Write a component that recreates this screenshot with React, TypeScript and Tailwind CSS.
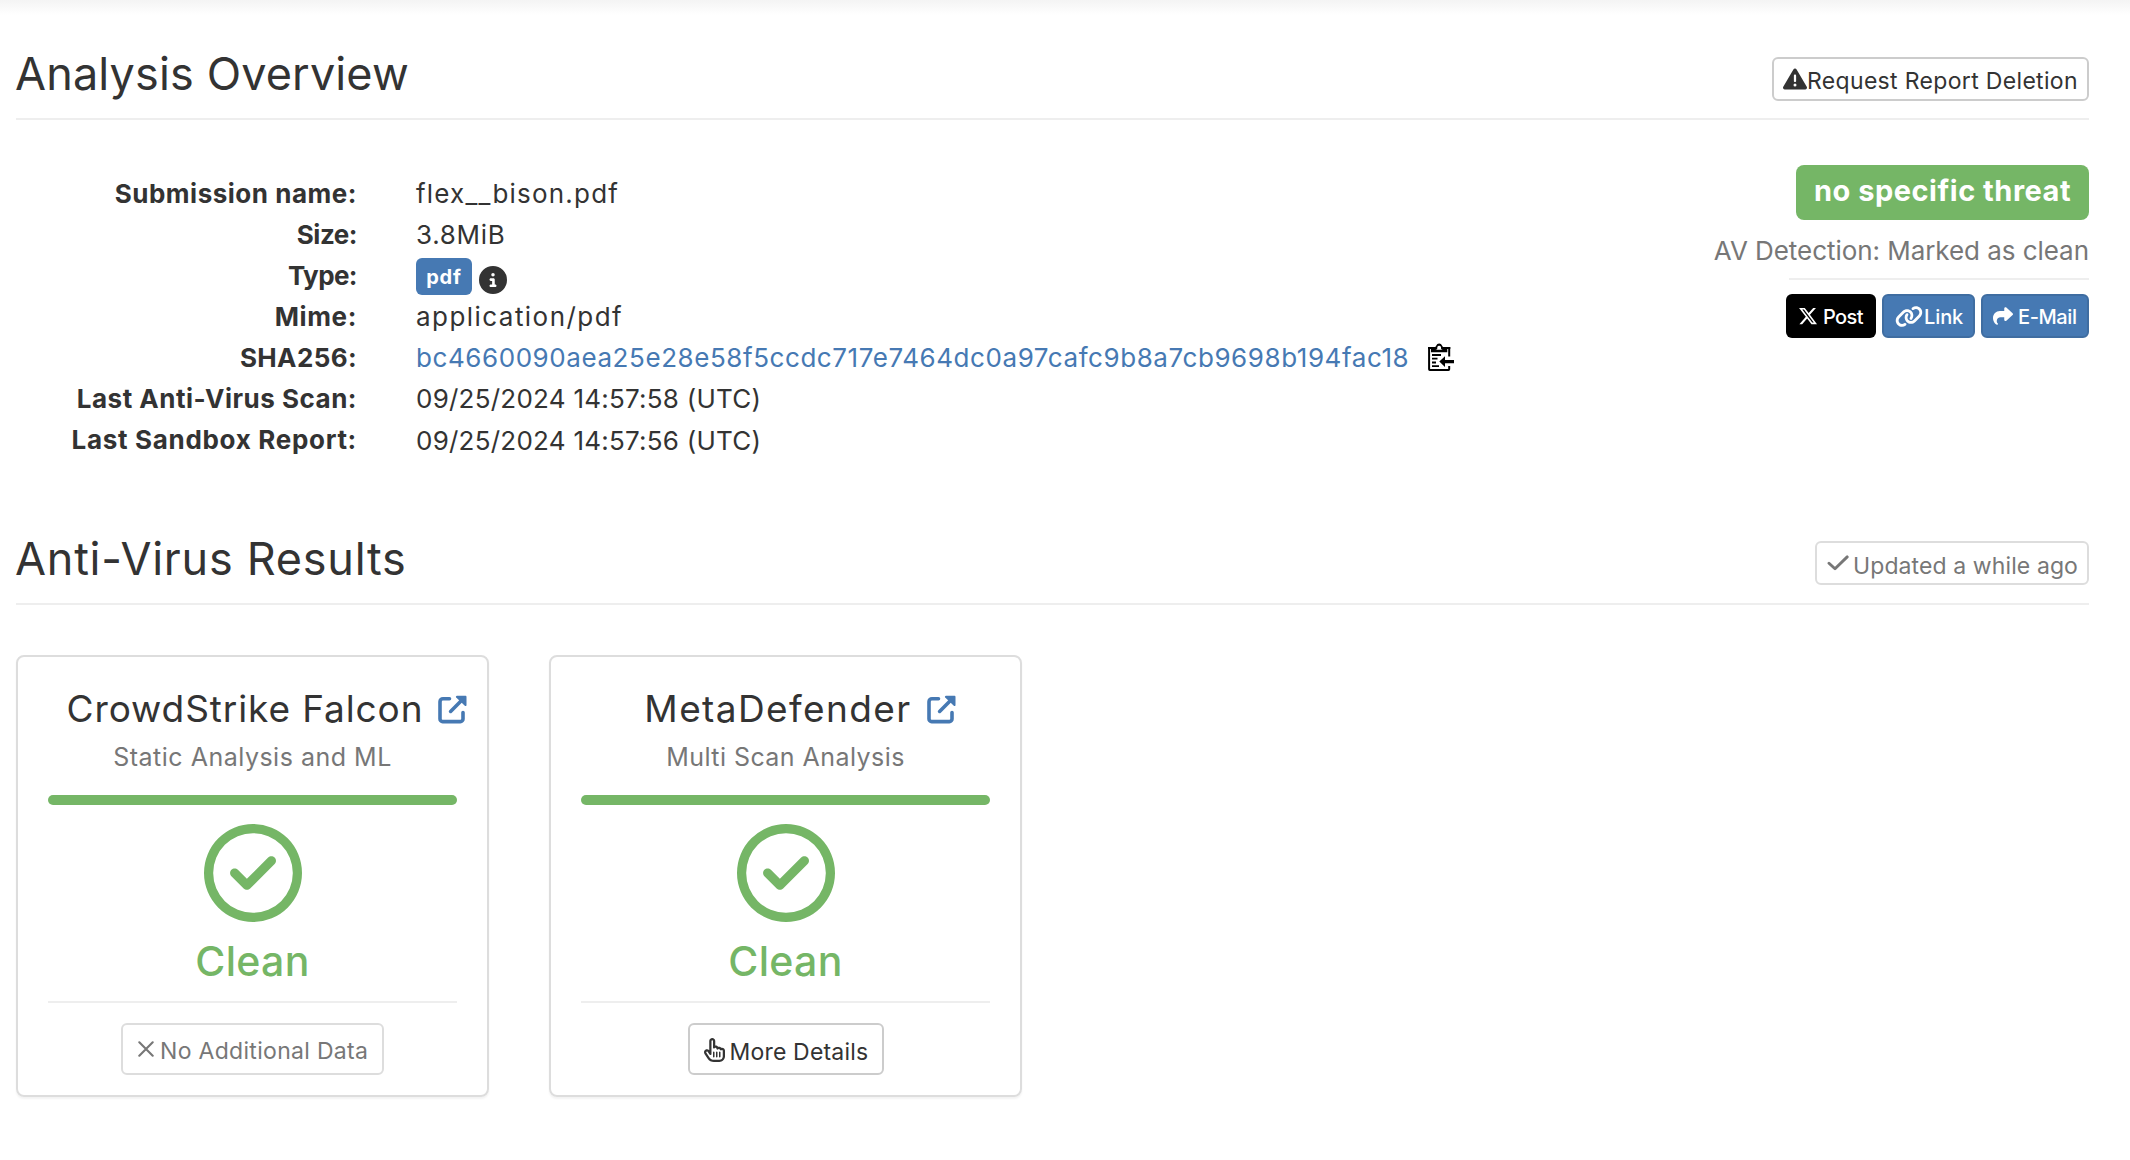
import type { ReactNode } from "react";
import {
  FaCircleInfo,
  FaLink,
  FaRegCircleCheck,
  FaRegHandPointer,
  FaShare,
  FaTriangleExclamation,
  FaXTwitter,
} from "react-icons/fa6";

function ExternalIcon() {
  return (
    <svg viewBox="0 0 29 29" className="h-[29px] w-[29px] shrink-0 text-[#4679b3]" fill="none" stroke="currentColor">
      <path d="M11.5 3.7H5a3 3 0 0 0-3 3V24a2.6 2.6 0 0 0 2.6 2.6H22.4A2.6 2.6 0 0 0 25 24V17.5" strokeWidth="3.6" strokeLinecap="round" />
      <path d="M12.6 16.4L23.5 5.5" strokeWidth="3.6" strokeLinecap="round" />
      <path d="M19 .8h8.6c.5 0 .9.4.9.9v8.400c0 1-1 1.300-1.700.7L18.200 2.600C17.500 1.900 18 .8 19 .8Z" fill="currentColor" stroke="none" />
    </svg>
  );
}

function ClipboardIcon() {
  return (
    <svg viewBox="0 0 26 28" className="h-[28px] w-[26px] shrink-0 text-black" fill="none" stroke="currentColor">
      <path d="M21.200 13.500V5H1.100V26.300c0 .4.300.7.700.7H20.500c.4 0 .700-.3.700-.7V23" strokeWidth="2" />
      <path d="M0 4h6.500c1 0 1.600-.6 1.800-1.500a3 3 0 0 1 5.700 0c.2.900.8 1.500 1.800 1.500h6.500v2h-3v3.300H3V6H0Z" fill="currentColor" stroke="none" />
      <path d="M9.300 4.200a1.900 1.900 0 0 1 3.700 0v1.200c.5 1 1.500 1.400 2.500 1.400H6.800c1 0 2-.4 2.500-1.400Z" fill="white" stroke="none" />
      <path d="M4 12h9M4 15.700h5.500M4 19.500h4M4 23.200h7" strokeWidth="1.800" />
      <path d="M11.300 18.500L17 13.300V17h9v3.200h-9v3.700Z" fill="currentColor" stroke="none" />
    </svg>
  );
}

function XMark() {
  return (
    <svg viewBox="0 0 16 16" className="h-4 w-4 shrink-0" fill="none" stroke="currentColor" strokeWidth="2.100" strokeLinecap="round">
      <path d="M1.300 1.300l13.400 13.400M14.700 1.300L1.300 14.700" />
    </svg>
  );
}

function CheckMark() {
  return (
    <svg viewBox="0 0 22 16" className="h-4 w-[22px] shrink-0" fill="none" stroke="currentColor" strokeWidth="2.900" strokeLinecap="round" strokeLinejoin="round">
      <path d="M2 8.300l6 5.500L20.200 1.900" />
    </svg>
  );
}

function SectionHeader({ title, children }: { title: ReactNode; children: ReactNode }) {
  return (
    <header className="flex h-[120px] items-start justify-between border-b-2 border-[#eeeeee]">
      <h1 className="mt-[49px] -ml-px text-[45px] leading-[50px]">{title}</h1>
      {children}
    </header>
  );
}

function Row({ label, spacing, children }: { label: string; spacing: string; children: ReactNode }) {
  return (
    <div className="flex h-[41.080px] gap-[59px] leading-[41px] whitespace-nowrap">
      <dt className={`w-[341px] text-right font-bold ${spacing}`}>{label}</dt>
      <dd className="flex items-center">{children}</dd>
    </div>
  );
}

function Card({ title, subtitle, children }: { title: ReactNode; subtitle: ReactNode; children: ReactNode }) {
  return (
    <article className="flex h-[442px] w-[473px] flex-col rounded-lg border-2 border-[#dddddd] px-[30px] pt-8 text-center whitespace-nowrap shadow-[0_2px_2px_rgba(0,0,0,0.05)]">
      <div className="-mx-[30px] flex items-center justify-center gap-[15px] pl-[29px]">
        <h2 className="text-[37px] leading-10">{title}</h2>
        <ExternalIcon />
      </div>
      <p className="mt-[10px] text-[25px] leading-9 text-[#777777]">{subtitle}</p>
      <div className="mt-5 h-[10px] rounded-full bg-[#75b666]" />
      <FaRegCircleCheck className="mx-auto mt-[19px] h-[98px] w-[98px] shrink-0 text-[#75b666]" />
      <p className="mt-[14px] text-[41px] font-medium leading-[50px] tracking-[0.300px] text-[#75b666]">Clean</p>
      <div className="mt-[15px] mb-5 h-[2px] bg-[#eeeeee]" />
      {children}
    </article>
  );
}

export default function App() {
  return (
    <div className="h-[1160px] w-full bg-[linear-gradient(to_bottom,#f4f4f4_0px,#ffffff_15px)] pl-4 font-[Inter,sans-serif] text-[26px] text-[#333333]">
      <main className="w-[2073px]">
        <SectionHeader title={<span className="tracking-[0.140px]">Analysis Overview</span>}>
          <button className="mt-[57px] flex h-11 w-[317px] items-center rounded-md border-2 border-[#cccccc] bg-white pl-[9px] text-[23px] whitespace-nowrap">
            <FaTriangleExclamation className="h-6 w-6 shrink-0" />
            <span className="relative top-[2px] tracking-[0.330px]">Request Report Deletion</span>
          </button>
        </SectionHeader>

        <section className="flex h-[365px] items-start justify-between">
          <dl className="pt-[53px]">
            <Row label="Submission name:" spacing="tracking-[0.520px]">
              <span className="tracking-[1.200px]">flex__bison.pdf</span>
            </Row>
            <Row label="Size:" spacing="tracking-[-0.480px]">
              <span className="tracking-[0.700px]">3.8MiB</span>
            </Row>
            <Row label="Type:" spacing="tracking-[-0.570px]">
              <span className="mt-px flex h-[37px] w-14 items-center justify-center rounded-md bg-[#4679b3] pt-[3px] text-[20px] font-bold tracking-[0.800px] text-white">
                pdf
              </span>
              <FaCircleInfo className="mt-[9px] ml-[7px] h-7 w-7" />
            </Row>
            <Row label="Mime:" spacing="tracking-[0.630px]">
              <span className="tracking-[1.450px]">application/pdf</span>
            </Row>
            <Row label="SHA256:" spacing="tracking-[0.380px]">
              <span className="tracking-[0.570px] text-[#4679b3]">
                bc4660090aea25e28e58f5ccdc717e7464dc0a97cafc9b8a7cb9698b194fac18
              </span>
              <span className="-mt-px ml-[19px]">
                <ClipboardIcon />
              </span>
            </Row>
            <Row label="Last Anti-Virus Scan:" spacing="tracking-[0.500px]">
              <span className="tracking-[0.240px]">09/25/2024 14:57:58 (UTC)</span>
            </Row>
            <Row label="Last Sandbox Report:" spacing="tracking-[0.690px]">
              <span className="tracking-[0.240px]">09/25/2024 14:57:56 (UTC)</span>
            </Row>
          </dl>

          <aside className="flex flex-col items-end pt-[45px] whitespace-nowrap">
            <div className="flex h-[55px] w-[293px] items-center justify-center rounded-lg bg-[#75b666] pb-1 text-[29px] font-bold tracking-[0.520px] text-white">
              no specific threat
            </div>
            <p className="mt-[13px] leading-9 tracking-[-0.050px] text-[#777777]">AV Detection: Marked as clean</p>
            <div className="mt-[9px] h-[2px] w-[300px] bg-[#eeeeee]" />
            <div className="mt-[14px] flex gap-[6px] text-[20px] font-medium text-white">
              <button className="flex h-11 w-[90px] items-center rounded-md bg-black pl-[12px]">
                <FaXTwitter className="h-5 w-5 shrink-0" />
                <span className="relative top-px ml-[5px] tracking-[-0.600px]">Post</span>
              </button>
              <button className="flex h-11 w-[93px] items-center rounded-md border-2 border-[#3f6da1] bg-[#4679b3] pl-[11px]">
                <FaLink className="h-[23px] w-[28px] shrink-0" />
                <span className="relative top-px ml-px tracking-[-0.100px]">Link</span>
              </button>
              <button className="flex h-11 w-[108px] items-center rounded-md border-2 border-[#3f6da1] bg-[#4679b3] pl-[10px]">
                <FaShare className="h-5 w-5 shrink-0" />
                <span className="relative top-px ml-[5px] tracking-[-0.400px]">E-Mail</span>
              </button>
            </div>
          </aside>
        </section>

        <SectionHeader title={<span className="tracking-[0.750px]">Anti-Virus Results</span>}>
          <button className="mt-[56px] flex h-11 w-[274px] items-center rounded-md border-2 border-[#dddddd] bg-white pl-[10px] text-[23px] whitespace-nowrap text-[#777777]">
            <CheckMark />
            <span className="relative top-[3px] ml-[4px] tracking-[0.100px]">Updated a while ago</span>
          </button>
        </SectionHeader>

        <section className="flex gap-[60px] pt-[50px]">
          <Card
            title={<span className="tracking-[0.900px]">CrowdStrike Falcon</span>}
            subtitle={<span className="tracking-[0.500px]">Static Analysis and ML</span>}
          >
            <button className="mx-auto flex h-[52px] w-[263px] items-center rounded-md border-2 border-[#dddddd] pl-[15px] text-[23px] text-[#777777]">
              <XMark />
              <span className="relative top-[2px] ml-[6px] tracking-[0.310px]">No Additional Data</span>
            </button>
          </Card>
          <Card
            title={<span className="tracking-[1.400px]">MetaDefender</span>}
            subtitle={<span className="tracking-[0.440px]">Multi Scan Analysis</span>}
          >
            <button className="mx-auto flex h-[52px] w-[196px] items-center rounded-md border-2 border-[#cccccc] pl-[14px] text-[23px]">
              <FaRegHandPointer className="relative top-px h-6 w-[21px] shrink-0" />
              <span className="relative top-[3px] ml-[5px] tracking-[0.180px]">More Details</span>
            </button>
          </Card>
        </section>
      </main>
    </div>
  );
}
